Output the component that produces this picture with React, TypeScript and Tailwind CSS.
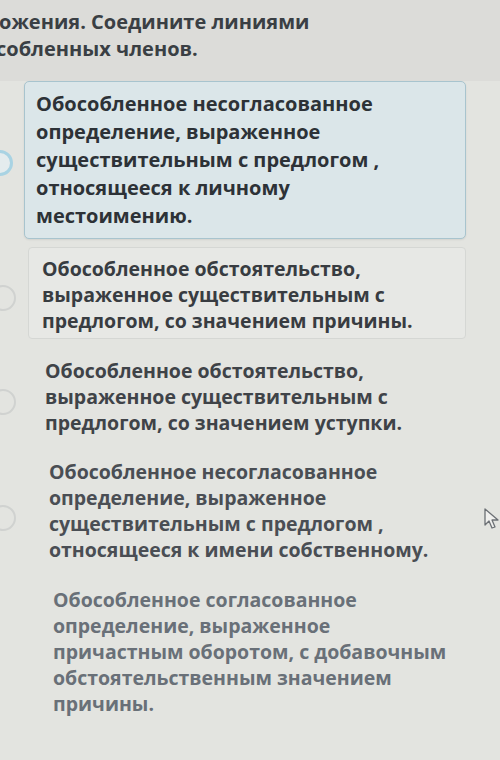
type Option = {
  lines: string[];
  ml: string;
  pt: string;
  color: string;
  radio?: string;
  boxed?: boolean;
};

const options: Option[] = [
  {
    lines: ["Обособленное обстоятельство,", "выраженное существительным с", "предлогом, со значением причины."],
    ml: "ml-[28px]",
    pt: "pt-[8px] pl-[13px]",
    color: "text-[#383c41]",
    radio: "top-[38px]",
    boxed: true,
  },
  {
    lines: ["Обособленное обстоятельство,", "выраженное существительным с", "предлогом, со значением уступки."],
    ml: "ml-[30px]",
    pt: "pt-[10px] pl-[14px]",
    color: "text-[#3f4348]",
    radio: "top-[42px]",
  },
  {
    lines: [
      "Обособленное несогласованное",
      "определение, выраженное",
      "существительным с предлогом ,",
      "относящееся к имени собственному.",
    ],
    ml: "ml-[32px]",
    pt: "pt-[9px] pl-[16px]",
    color: "text-[#4a4e54]",
    radio: "top-[56px]",
  },
  {
    lines: [
      "Обособленное согласованное",
      "определение, выраженное",
      "причастным оборотом, с добавочным",
      "обстоятельственным значением",
      "причины.",
    ],
    ml: "ml-[34px]",
    pt: "pt-[10px] pl-[18px]",
    color: "text-[#697078]",
  },
];

export default function App() {
  return (
    <div
      className="relative w-[500px] h-[760px] overflow-hidden bg-[#e3e4e0]"
      style={{ fontFamily: '"Open Sans", "Noto Sans", sans-serif' }}
    >
      {/* header */}
      <div className="bg-[#dcdcd9] pt-[8px] pb-[19px]">
        <div className="text-[20px] leading-[27px] font-bold text-[#3a3f44] whitespace-nowrap -ml-[1px]">
          ожения. Соедините линиями
        </div>
        <div className="text-[20px] leading-[27px] font-bold text-[#3a3f44] whitespace-nowrap -ml-[4px]">
          собленных членов.
        </div>
      </div>

      <div className="flex flex-col gap-[8px]">
        {/* selected card */}
        <div className="relative">
          <div className="absolute -left-[13px] top-[69px] w-[26px] h-[26px] rounded-full border-[3px] border-[#a9d3e3] bg-[#e4ecee]" />
          <div className="ml-[24px] w-[442px] rounded-[5px] border border-[#a8c4ce] bg-[#dbe6e9] pl-[11px] py-[8px] shadow-[0_1px_2px_rgba(0,0,0,0.08)]">
            {[
              "Обособленное несогласованное",
              "определение, выраженное",
              "существительным с предлогом ,",
              "относящееся к личному",
              "местоимению.",
            ].map((l) => (
              <div key={l} className="text-[20px] leading-[28px] font-bold text-[#2d3237] whitespace-nowrap">
                {l}
              </div>
            ))}
          </div>
        </div>

        {options.map((o, i) => (
          <div key={i} className="relative">
            {o.radio && (
              <div className={`absolute -left-[10px] ${o.radio} w-[26px] h-[26px] rounded-full border-[2px] border-[#d0d2d0]`} />
            )}
            <div
              className={`${o.ml} w-[438px] rounded-[4px] border pb-[4px] ${
                o.boxed ? "border-[#d5d7d4] bg-[#e7e8e5]" : "border-transparent"
              } ${o.pt}`}
            >
              {o.lines.map((l) => (
                <div key={l} className={`text-[19.5px] leading-[26px] font-bold whitespace-nowrap ${o.color}`}>
                  {l}
                </div>
              ))}
            </div>
          </div>
        ))}
      </div>

      {/* mouse cursor */}
      <svg className="absolute left-[484px] top-[508px]" width="16" height="22" viewBox="0 0 16 22">
        <path
          d="M1 1 L1 17 L5 13 L8 20 L11 19 L8 12 L14 12 Z"
          fill="#f0f0ee"
          stroke="#6c7075"
          strokeWidth="1.3"
          strokeLinejoin="round"
        />
      </svg>
    </div>
  );
}
